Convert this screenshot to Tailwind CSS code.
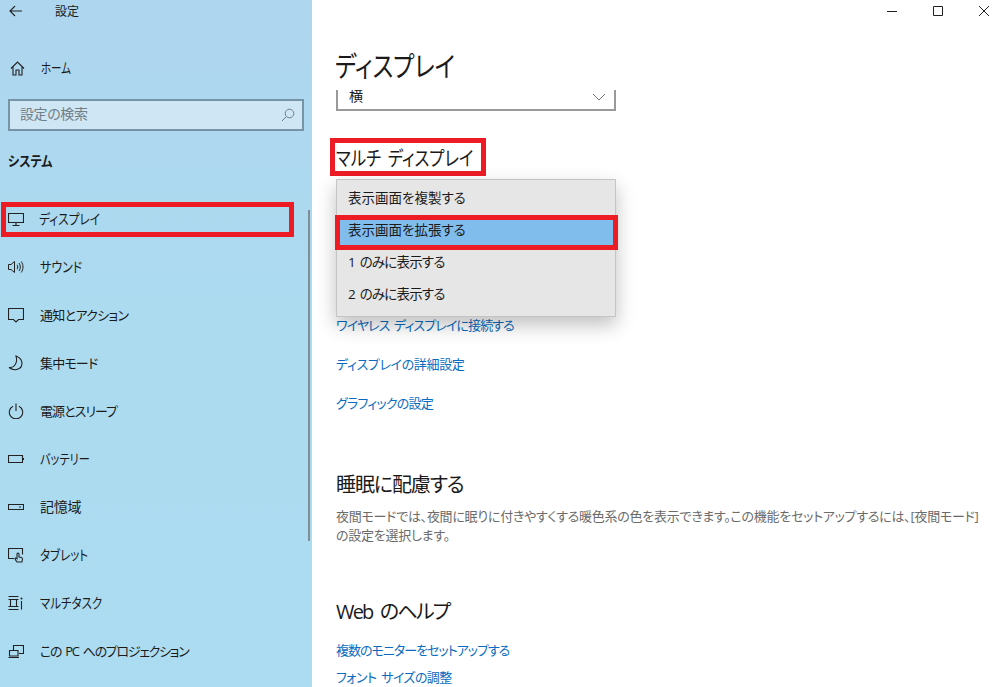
<!DOCTYPE html>
<html lang="ja">
<head>
<meta charset="utf-8">
<script src="https://cdn.jsdelivr.net/npm/@tailwindcss/browser@4"></script>
</head>
<body class="w-[993px] h-[687px] overflow-hidden bg-white font-['Open_Sans','Noto_Sans_CJK_JP',sans-serif] text-[#1a1a1a] [font-feature-settings:'palt']">
<div class="relative flex items-start w-[993px] h-[687px] overflow-hidden">
  <!-- Sidebar -->
  <aside class="relative w-[312px] h-full shrink-0 flex flex-col bg-gradient-to-b from-[#aed6ee] via-[#acdbf0] to-[#acdcf1]">
    <div class="h-[22px] flex items-center">
      <svg class="ml-[9px] w-[14px] h-[12px]" viewBox="0 0 14 12" fill="none" stroke="#222" stroke-width="1.1"><path d="M13 6H1M6 1 1 6l5 5"/></svg>
      <span class="ml-[32px] mt-[2px] text-[12px] leading-none">設定</span>
    </div>
    <div class="mt-[22px] h-12 flex items-center">
      <svg class="ml-[10px] w-[15px] h-[15px]" viewBox="0 0 15 15" fill="none" stroke="#222" stroke-width="1.1"><path d="M1 7.500 7.500 1 14 7.500M3 5.800V14h3V9h3v5h3V5.800"/></svg>
      <span class="ml-[16px] text-[14px] leading-none origin-left scale-x-[0.75]">ホーム</span>
    </div>
    <div class="mx-2 mt-[7px] h-8 flex items-center justify-between border-2 border-[#7694a6] bg-[#cfe6f4] pl-[10px] pr-[7px]">
      <span class="pb-[2px] text-[14px] tracking-[-0.4px] leading-none text-[#6f7f88]">設定の検索</span>
      <svg class="w-[14px] h-[14px]" viewBox="0 0 14 14" fill="none" stroke="#6f7f88" stroke-width="1"><circle cx="8.500" cy="5.500" r="4.300"/><path d="M5.300 8.700 1 13"/></svg>
    </div>
    <div class="mt-[18px] h-6 flex items-center pl-2 text-[14px] font-bold leading-none"><span class="origin-left scale-x-[0.86]">システム</span></div>
    <nav class="mt-[22px] flex flex-col">
      <div class="relative h-12 flex items-center">
        <div class="absolute left-[1px] top-[7px] w-[293px] h-[35px] border-[5px] border-[#ed1c24]"></div>
        <svg class="ml-2 w-4 h-4" viewBox="0 0 16 16" fill="none" stroke="#222" stroke-width="1.1"><path d="M.5 2.500h15v9H.5zM8 11.500v3M4.500 14.500h7"/></svg>
        <span class="ml-[15px] text-[14px] leading-none origin-left scale-x-[0.835]">ディスプレイ</span>
      </div>
      <div class="h-12 flex items-center">
        <svg class="ml-2 w-4 h-4" viewBox="0 0 16 16" fill="none" stroke="#222" stroke-width="1"><path d="M.5 5.500H3L6.500 2.500v11L3 10.500H.5zM9 5.800c1 1.400 1 3 0 4.400M11 4c1.800 2.500 1.800 5.500 0 8M13.200 2.500c2.400 3.400 2.400 7.600 0 11"/></svg>
        <span class="ml-[16px] text-[14px] leading-none origin-left scale-x-[0.857]">サウンド</span>
      </div>
      <div class="h-12 flex items-center">
        <svg class="ml-2 w-4 h-4" viewBox="0 0 16 16" fill="none" stroke="#222" stroke-width="1.1"><path d="M.5 1.500h15v11h-5L8 15l-2.500-2.500h-5z"/></svg>
        <span class="ml-[16px] text-[13px] tracking-[-0.7px] leading-none">通知とアクション</span>
      </div>
      <div class="h-12 flex items-center">
        <svg class="ml-2 w-4 h-4" viewBox="0 0 16 16" fill="none" stroke="#222" stroke-width="1.1"><path d="M8 1c5 1.500 7 6 5.500 10C12 14.500 6 16.500 1 12.500 6 13.500 10 8 8 1z"/></svg>
        <span class="ml-[16px] text-[13px] tracking-[-0.8px] leading-none">集中モード</span>
      </div>
      <div class="h-12 flex items-center">
        <svg class="ml-2 w-4 h-4" viewBox="0 0 16 16" fill="none" stroke="#222" stroke-width="1.1"><path d="M5 3.200a6.700 6.700 0 1 0 6 0M8 .5V8"/></svg>
        <span class="ml-[16px] text-[13px] tracking-[-0.95px] leading-none">電源とスリープ</span>
      </div>
      <div class="h-12 flex items-center">
        <svg class="ml-2 w-4 h-4" viewBox="0 0 16 16" fill="none" stroke="#222" stroke-width="1.1"><path d="M.5 4.500h14v7H.5zM15.500 7v2"/></svg>
        <span class="ml-[16px] text-[14px] leading-none origin-left scale-x-[0.8]">バッテリー</span>
      </div>
      <div class="h-12 flex items-center">
        <svg class="ml-2 w-4 h-4" viewBox="0 0 16 16" fill="none" stroke="#222" stroke-width="1.1"><path d="M.5 5.500h15v5H.5zM11 8h2"/></svg>
        <span class="ml-[16px] text-[14px] tracking-[-0.3px] leading-none">記憶域</span>
      </div>
      <div class="h-12 flex items-center">
        <svg class="ml-2 w-4 h-4" viewBox="0 0 16 16" fill="none" stroke="#222" stroke-width="1.1"><path d="M6 11.500H.5v-10h14v6M9 15c-1-1.500-2-2.500-2-3.500 0-.8 1-.8 2 .2V7a1 1 0 0 1 2 0v3l2.500.5c1 .3 1 1.500.8 2.500L14 15z"/></svg>
        <span class="ml-[16px] text-[14px] leading-none origin-left scale-x-[0.82]">タブレット</span>
      </div>
      <div class="h-12 flex items-center">
        <svg class="ml-2 w-4 h-4" viewBox="0 0 16 16" fill="none" stroke="#222" stroke-width="1.1"><path d="M.5 1.500h10M.5 14.500h10M2.500 4.500v7M8.500 4.500v7M.5 11.500h10M.5 4.500h10M13.500 6v8.500"/><circle cx="13.500" cy="3.500" r="1" fill="#222" stroke="none"/></svg>
        <span class="ml-[16px] text-[14px] leading-none origin-left scale-x-[0.82]">マルチタスク</span>
      </div>
      <div class="h-12 flex items-center">
        <svg class="ml-2 w-4 h-4" viewBox="0 0 16 16" fill="none" stroke="#222" stroke-width="1.1"><path d="M5.500 7.500v-5h10v8H11M1.500 7.500h8.500v5.500H1.500zM.5 14.500h10.500"/></svg>
        <span class="ml-[16px] text-[13px] tracking-[-1.3px] [word-spacing:2px] leading-none">この PC へのプロジェクション</span>
      </div>
    </nav>
    <div class="absolute left-[308px] top-[210px] w-[2px] h-[331px] bg-[#7f8e96]"></div>
  </aside>

  <!-- Main -->
  <main class="relative flex-1 pl-6 flex flex-col">
    <h1 class="mt-[46px] h-10 -ml-[1px] flex items-center text-[28px] font-normal leading-none"><span class="origin-left scale-x-[0.82]">ディスプレイ</span></h1>
    <div class="mt-[4px] w-[280px] h-[21px] border-x-2 border-b-2 border-[#999] flex items-center justify-between pl-[11px] pr-[8px] overflow-hidden">
      <span class="text-[14px] leading-none -mt-[8px]">横</span>
      <svg class="w-[14px] h-[8px] -mt-[6px]" viewBox="0 0 14 8" fill="none" stroke="#777" stroke-width="1"><path d="m1 1 6 6 6-6"/></svg>
    </div>
    <div class="relative mt-[27px] h-[38px] flex items-center pt-[3px]">
      <div class="absolute -left-[6px] top-0 w-[156px] h-[38px] border-[5px] border-[#ed1c24]"></div>
      <h2 class="text-[20px] font-normal [word-spacing:3px] leading-none origin-left scale-x-[0.82]">マルチ ディスプレイ</h2>
    </div>
    <a class="mt-[137px] h-6 flex items-center text-[13px] tracking-[-0.9px] [word-spacing:2px] leading-none text-[#0a6cc0]">ワイヤレス ディスプレイに接続する</a>
    <a class="mt-[15px] h-6 flex items-center text-[13px] tracking-[-0.36px] leading-none text-[#0a6cc0]">ディスプレイの詳細設定</a>
    <a class="mt-[15px] h-6 flex items-center text-[13px] tracking-[-0.8px] leading-none text-[#0a6cc0]">グラフィックの設定</a>
    <h2 class="mt-[55px] h-[30px] flex items-center text-[20px] tracking-[-1.1px] font-normal leading-none">睡眠に配慮する</h2>
    <p class="mt-[7px] w-[648px] text-[13px] tracking-[-0.26px] leading-[19px] text-[#6b6b6b]">夜間モードでは、夜間に眠りに付きやすくする暖色系の色を表示できます。この機能をセットアップするには、[夜間モード] の設定を選択します。</p>
    <h2 class="mt-[52px] h-[30px] flex items-center text-[20px] tracking-[-1.8px] [word-spacing:4px] font-normal leading-none">Web のヘルプ</h2>
    <a class="mt-[11px] h-6 flex items-center text-[13px] tracking-[-1px] leading-none text-[#0a6cc0]">複数のモニターをセットアップする</a>
    <a class="mt-[3px] h-6 flex items-center text-[13px] tracking-[-0.55px] [word-spacing:2px] leading-none text-[#0a6cc0]">フォント サイズの調整</a>

    <!-- Dropdown menu -->
    <div class="absolute left-6 top-[179px] w-[280px] h-[138px] flex flex-col justify-center border border-[#c4c4c4] bg-[#e6e6e6] shadow-[0_8px_18px_rgba(0,0,0,0.25)]">
      <div class="h-8 flex items-center pl-[11px] pb-[3px] text-[13.5px] leading-none">表示画面を複製する</div>
      <div class="relative h-8 flex items-center pl-[11px] pb-[2px] text-[13.5px] leading-none bg-[#80bded]">
        <div class="absolute -left-[2px] -top-[1px] w-[283px] h-[35px] border-[5px] border-[#ed1c24]"></div>
        表示画面を拡張する
      </div>
      <div class="h-8 flex items-center pl-[11px] pb-[3px] text-[13.5px] tracking-[-0.8px] [word-spacing:2px] leading-none">1 のみに表示する</div>
      <div class="h-8 flex items-center pl-[11px] pb-[3px] text-[13.5px] tracking-[-0.8px] [word-spacing:2px] leading-none">2 のみに表示する</div>
    </div>

    <!-- Window buttons -->
    <div class="absolute right-[4px] top-0 h-[22px] flex items-center gap-[36px]">
      <svg class="w-[10px] h-[10px]" viewBox="0 0 10 10" stroke="#222"><path d="M0 5.500h10"/></svg>
      <svg class="w-[10px] h-[10px]" viewBox="0 0 10 10" fill="none" stroke="#222"><path d="M.5.500h9v9h-9z"/></svg>
      <svg class="w-[10px] h-[10px]" viewBox="0 0 10 10" stroke="#222"><path d="m0 0 10 10M10 0 0 10"/></svg>
    </div>
  </main>
</div>
</body>
</html>
